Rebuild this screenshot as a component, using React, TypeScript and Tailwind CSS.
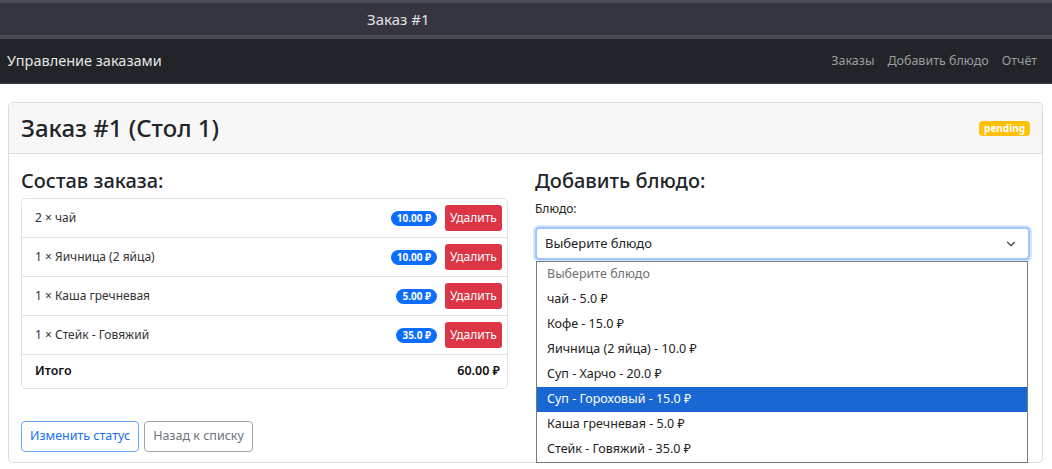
import { ChevronDown } from "lucide-react";

const items = [
  { qty: 2, name: "чай", price: "10.00 ₽" },
  { qty: 1, name: "Яичница (2 яйца)", price: "10.00 ₽" },
  { qty: 1, name: "Каша гречневая", price: "5.00 ₽" },
  { qty: 1, name: "Стейк - Говяжий", price: "35.0 ₽" },
];

const options = [
  "чай - 5.0 ₽",
  "Кофе - 15.0 ₽",
  "Яичница (2 яйца) - 10.0 ₽",
  "Суп - Харчо - 20.0 ₽",
  "Суп - Гороховый - 15.0 ₽",
  "Каша гречневая - 5.0 ₽",
  "Стейк - Говяжий - 35.0 ₽",
];

export default function App() {
  return (
    <div
      className="w-[1052px] h-[469px] overflow-hidden bg-white text-[#212529]"
      style={{ fontFamily: '"Noto Sans", "Open Sans", sans-serif' }}
    >
      {/* window title */}
      <div className="h-[39px] bg-[#35353f] border-t-[3px] border-b-[4px] border-[#4b4b56] flex items-center pl-[367px]">
        <span className="text-[15px] text-[#e2e2e6]">Заказ #1</span>
      </div>

      {/* navbar */}
      <nav className="h-[45px] bg-[#212529] flex items-center justify-between px-[7px] border-b border-[#3a3d42]">
        <span className="text-[14.5px] text-[#e4e4e4]">Управление заказами</span>
        <div className="flex gap-[13px] text-[12.5px] text-[#9a9da0] pr-[8px]">
          <span>Заказы</span>
          <span>Добавить блюдо</span>
          <span>Отчёт</span>
        </div>
      </nav>

      <div className="pt-[18px] pl-[8px] pr-[9px]">
        <div className="border border-[#dcdcdc] rounded-[5px] h-[361px]">
          <div className="h-[51px] bg-[#f7f7f7] border-b border-[#dcdcdc] rounded-t-[5px] flex items-center justify-between px-[12px]">
            <h3 className="text-[24px] leading-none font-medium">Заказ #1 (Стол 1)</h3>
            <span className="bg-[#ffc107] text-white text-[10px] font-bold rounded-[4px] px-[5px] h-[15px] flex items-center">
              pending
            </span>
          </div>

          <div className="px-[12px] pt-[14px] grid grid-cols-[487px_1fr] gap-[27px]">
            {/* left */}
            <div>
              <h4 className="text-[20px] leading-[26px] font-medium">Состав заказа:</h4>
              <div className="mt-[4px] border border-[#e1e3e6] rounded-[5px] text-[12px]">
                {items.map((it, i) => (
                  <div
                    key={i}
                    className="h-[39px] flex items-center justify-between pl-[13px] pr-[5px] border-b border-[#e1e3e6]"
                  >
                    <span className="text-[#333]">
                      {it.qty} × {it.name}
                    </span>
                    <div className="flex items-center gap-[8px]">
                      <span className="bg-[#0d6efd] text-white text-[10px] font-bold rounded-full px-[6px] h-[15px] flex items-center">
                        {it.price}
                      </span>
                      <button className="bg-[#dc3545] text-white text-[12px] rounded-[3px] w-[57px] h-[26px] flex items-center justify-center">
                        Удалить
                      </button>
                    </div>
                  </div>
                ))}
                <div className="h-[33px] flex items-center justify-between pl-[13px] pr-[7px] font-semibold text-[12.5px] text-[#111]">
                  <span>Итого</span>
                  <span>60.00 ₽</span>
                </div>
              </div>
              <div className="mt-[32px] flex gap-[5px] text-[12.5px]">
                <button className="h-[31px] px-[8px] border-[1.5px] border-[#6ea8fe] text-[#1a6ef5] rounded-[4px]">
                  Изменить статус
                </button>
                <button className="h-[31px] px-[8px] border-[1.5px] border-[#a0a4a8] text-[#6c757d] rounded-[4px]">
                  Назад к списку
                </button>
              </div>
            </div>

            {/* right */}
            <div className="relative">
              <h4 className="text-[20px] leading-[26px] font-medium">Добавить блюдо:</h4>
              <div className="mt-[6px] text-[12px] leading-[18px] text-[#222]">Блюдо:</div>
              <div className="mt-[9px] h-[33px] border-[2px] border-[#9ec5fe] rounded-[4px] shadow-[0_0_0_2px_rgba(13,110,253,0.18)] flex items-center justify-between pl-[8px] pr-[10px] text-[13px]">
                <span>Выберите блюдо</span>
                <ChevronDown size={14} strokeWidth={2} className="text-[#444]" />
              </div>
              <div className="absolute left-[1px] right-[2px] top-[93px] bg-white border border-[#7a7a7a] text-[12.5px] text-[#222]">
                <div className="h-[25px] flex items-center pl-[10px] text-[#707070]">Выберите блюдо</div>
                {options.map((o, i) => (
                  <div
                    key={i}
                    className={
                      i === 4
                        ? "h-[25px] flex items-center pl-[10px] bg-[#1967d2] text-white"
                        : "h-[25px] flex items-center pl-[10px]"
                    }
                  >
                    {o}
                  </div>
                ))}
              </div>
            </div>
          </div>
        </div>
      </div>
    </div>
  );
}
